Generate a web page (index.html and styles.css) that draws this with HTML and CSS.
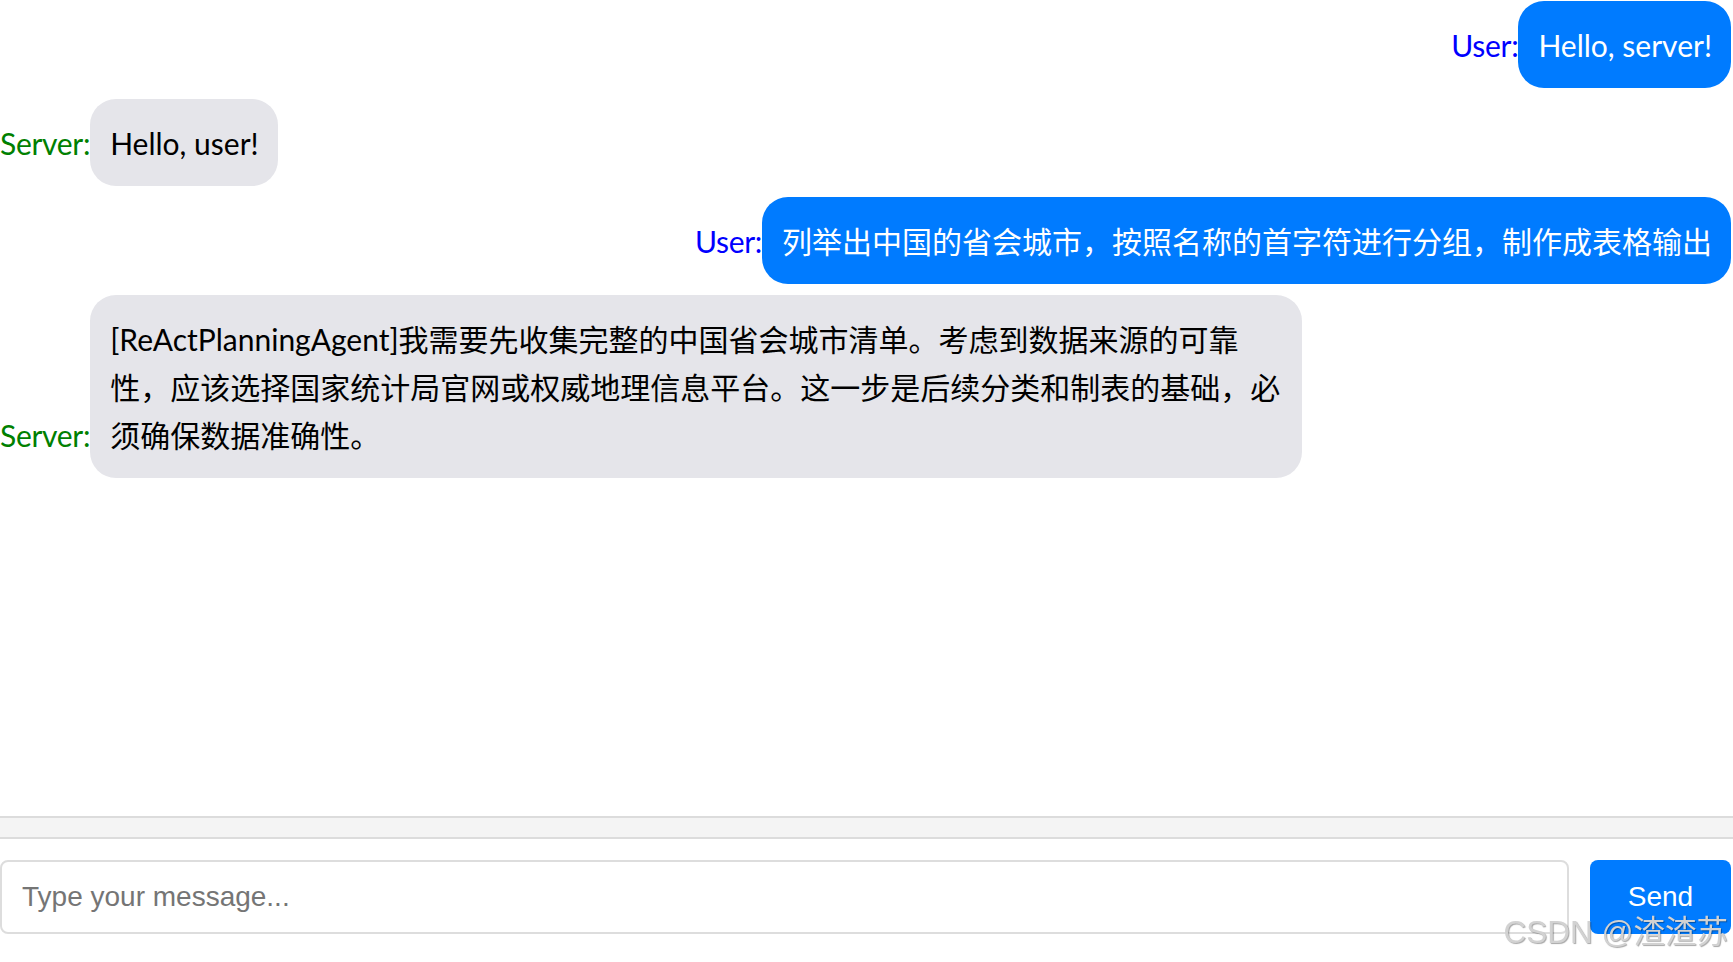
FILE: index.html
```
<!DOCTYPE html>
<html lang="zh-CN">
<head>
<meta charset="utf-8">
<title>Chat</title>
<link rel="stylesheet" href="styles.css">
</head>
<body>
<div class="page">
  <div class="chat">
    <div class="msg user"><span class="label label-user">User:</span><div class="bubble bubble-user">Hello, server!</div></div>
    <div class="msg server"><span class="label label-server">Server:</span><div class="bubble bubble-server">Hello, user!</div></div>
    <div class="msg user"><span class="label label-user">User:</span><div class="bubble bubble-user">列举出中国的省会城市，按照名称的首字符进行分组，制作成表格输出</div></div>
    <div class="msg server"><span class="label label-server">Server:</span><div class="bubble bubble-server">[ReActPlanningAgent]我需要先收集完整的中国省会城市清单。考虑到数据来源的可靠性，应该选择国家统计局官网或权威地理信息平台。这一步是后续分类和制表的基础，必须确保数据准确性。</div></div>
  </div>
  <div class="bar"></div>
  <div class="input-row">
    <input class="input" type="text" placeholder="Type your message...">
    <button class="send" type="button">Send</button>
  </div>
</div>
<div class="watermark">CSDN @渣渣苏</div>
</body>
</html>
```
FILE: styles.css
```
html, body {
  margin: 0;
  padding: 0;
  background: #ffffff;
}
body {
  width: 1733px;
  height: 962px;
  overflow: hidden;
  font-family: Lato, "Noto Sans CJK SC", sans-serif;
}
.page {
  display: flex;
  flex-direction: column;
  height: 962px;
}
.chat {
  height: 816px;
  box-sizing: border-box;
  padding: 1px 2px 0 0;
  overflow: hidden;
}
.msg {
  font-size: 30px;
  line-height: 48px;
  margin: 0 0 11px;
}
.msg.user {
  text-align: right;
}
.msg.server {
  text-align: left;
}
.label {
  letter-spacing: -0.3px;
}
.label-user {
  color: #0000ff;
}
.label-server {
  color: #008000;
}
.bubble {
  display: inline-block;
  box-sizing: border-box;
  max-width: 70%;
  padding: 19.5px 19px 19.5px 20px;
  border-radius: 26px;
  text-align: left;
  vertical-align: baseline;
}
.bubble-user {
  background: #007bff;
  color: #ffffff;
}
.bubble-server {
  background: #e5e5ea;
  color: #000000;
}
.bar {
  height: 19px;
  border-top: 2px solid #dcdcdc;
  border-bottom: 2px solid #dcdcdc;
  background: #f4f4f4;
}
.input-row {
  display: flex;
  gap: 21px;
  margin-top: 21px;
  padding-right: 2px;
}
.input {
  flex: 1;
  height: 74px;
  box-sizing: border-box;
  margin: 0;
  border: 2px solid #dddddd;
  border-radius: 8px;
  padding: 0 20px;
  font-family: "Liberation Sans", Arial, sans-serif;
  font-size: 28px;
  color: #000;
  outline: none;
}
.input::placeholder {
  color: #757575;
}
.send {
  width: 141px;
  height: 74px;
  margin: 0;
  border: none;
  border-radius: 8px;
  background: #007bff;
  color: #ffffff;
  font-family: "Liberation Sans", Arial, sans-serif;
  font-size: 28px;
}
.watermark {
  position: fixed;
  top: 910px;
  right: 5px;
  font-family: "Liberation Sans", "Noto Sans CJK SC", sans-serif;
  font-size: 31.5px;
  line-height: 44px;
  color: #d2d2d2;
  text-shadow: 1px 1px 1px rgba(0, 0, 0, 0.35);
  white-space: nowrap;
}
```
